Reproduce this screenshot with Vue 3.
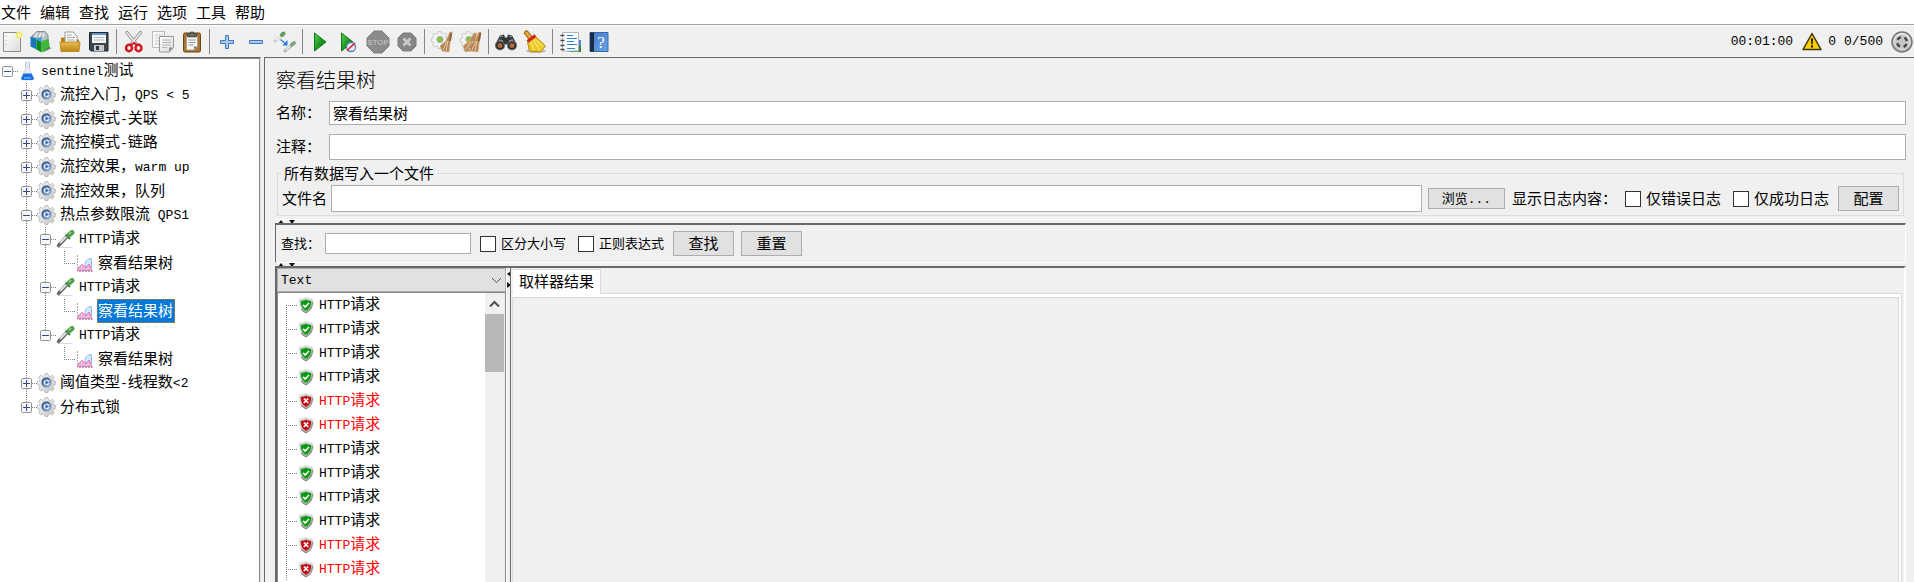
<script setup>
import { ref } from 'vue'

const menus = ['文件', '编辑', '查找', '运行', '选项', '工具', '帮助']

const toolGroups = [
  [['new', '新建'], ['templates', '模板'], ['open', '打开'], ['save', '保存']],
  [['cut', '剪切'], ['copy', '复制'], ['paste', '粘贴']],
  [['plus', '展开'], ['minus', '折叠'], ['toggle', '切换']],
  [['play', '启动'], ['playnow', '不停顿开始'], ['stop', '停止'], ['shutdown', '关闭']],
  [['clear', '清除'], ['clearall', '清除全部']],
  [['search', '搜索'], ['broom', '重置搜索']],
  [['list', '函数助手'], ['help', '帮助']],
]

// cells: one letter per indent column. "." blank, "v" line, "t" branch, "e" last branch
const tree = [
  { cells: 'r', box: '-', icon: 'flask', text: 'sentinel测试' },
  { cells: '.t', box: '+', icon: 'gear', text: '流控入门，QPS < 5' },
  { cells: '.t', box: '+', icon: 'gear', text: '流控模式-关联' },
  { cells: '.t', box: '+', icon: 'gear', text: '流控模式-链路' },
  { cells: '.t', box: '+', icon: 'gear', text: '流控效果，warm up' },
  { cells: '.t', box: '+', icon: 'gear', text: '流控效果，队列' },
  { cells: '.t', box: '-', icon: 'gear', text: '热点参数限流 QPS1' },
  { cells: '.vt', box: '-', icon: 'pipette', text: 'HTTP请求' },
  { cells: '.vve', icon: 'chart', text: '察看结果树' },
  { cells: '.vt', box: '-', icon: 'pipette', text: 'HTTP请求' },
  { cells: '.vve', icon: 'chart', text: '察看结果树', selected: true },
  { cells: '.ve', box: '-', icon: 'pipette', text: 'HTTP请求' },
  { cells: '.v.e', icon: 'chart', text: '察看结果树' },
  { cells: '.t', box: '+', icon: 'gear', text: '阈值类型-线程数<2' },
  { cells: '.e', box: '+', icon: 'gear', text: '分布式锁' },
]

const samples = [true, true, true, true, false, false, true, true, true, true, false, false]

const name = ref('察看结果树')
const comment = ref('')
const fileName = ref('')
const query = ref('')

// Splits a label into Latin and Chinese runs so each gets its own face and size
function runs(text) {
  return text.match(/[\x20-\x7e]+|[^\x20-\x7e]+/g).map((t) => ({ t, latin: t.charCodeAt(0) < 127 }))
}
</script>

<template>
  <div class="app">
    <svg class="defs" aria-hidden="true">
      <defs>
        <linearGradient id="gGreen" x1="0" y1="0" x2="1" y2="1">
          <stop offset="0" stop-color="#5fd05a" /><stop offset="0.5" stop-color="#1d9a22" /><stop offset="1" stop-color="#0a6b10" />
        </linearGradient>
        <linearGradient id="gGray" x1="0" y1="0" x2="0" y2="1">
          <stop offset="0" stop-color="#f2f2f2" /><stop offset="1" stop-color="#a8a8a8" />
        </linearGradient>
        <linearGradient id="gGear" x1="0" y1="0" x2="1" y2="1">
          <stop offset="0" stop-color="#fafafa" /><stop offset="1" stop-color="#c4c4c4" />
        </linearGradient>
        <linearGradient id="gRing" x1="0" y1="0" x2="1" y2="1">
          <stop offset="0" stop-color="#27477c" /><stop offset="1" stop-color="#8fb4e2" />
        </linearGradient>
        <linearGradient id="gGold" x1="0" y1="0" x2="0" y2="1">
          <stop offset="0" stop-color="#e8bd55" /><stop offset="1" stop-color="#bf8411" />
        </linearGradient>
        <linearGradient id="gPaper" x1="0" y1="0" x2="1" y2="1">
          <stop offset="0" stop-color="#ffffff" /><stop offset="1" stop-color="#dcdcdc" />
        </linearGradient>
        <linearGradient id="gBlue" x1="0" y1="0" x2="1" y2="1">
          <stop offset="0" stop-color="#3d78c6" /><stop offset="1" stop-color="#6fa6e6" />
        </linearGradient>
        <g id="gearShape">
          <path d="M8 0.6h3l.5 2.2 1.7.8 2-1.3 2.1 2.1-1.2 2 .7 1.700 2.200.5v3l-2.200.5-.7 1.700 1.200 2-2.100 2.100-2-1.200-1.700.7-.5 2.100H8l-.5-2.100-1.700-.7-2 1.200-2.100-2.100 1.200-2-.7-1.700-2-.5v-3l2-.5.7-1.700-1.200-2 2.100-2.100 2 1.300 1.700-.8z" />
        </g>
      </defs>
    </svg>

    <nav class="menubar">
      <button v-for="m in menus" :key="m" type="button" class="menu">{{ m }}</button>
    </nav>

    <header class="toolbar">
      <template v-for="(group, gi) in toolGroups" :key="gi">
        <span v-if="gi" class="sep"></span>
        <button v-for="[id, label] in group" :key="id" type="button" class="tool" :aria-label="label">
          <svg width="24" height="24" viewBox="0 0 24 24">
            <g v-if="id === 'new'">
              <path d="M3.500 2.500h17v19h-17z" fill="url(#gPaper)" stroke="#8c8c8c" />
              <path d="M6 6v12" stroke="#aaa" stroke-dasharray="1 3" />
              <circle cx="19" cy="5" r="3.500" fill="#f6e56a" /><circle cx="19" cy="5" r="1.500" fill="#fffde0" />
            </g>
            <g v-else-if="id === 'templates'">
              <path d="M3 6l5-4.500h8l3 3.500v6H4z" fill="#b9c0c4" stroke="#8a9296" />
              <path d="M6 7l2-4m2 4l2-4m2 4l1-4" stroke="#f5f5f5" stroke-width="1.300" />
              <path d="M1.500 6.500l6 2v11l-6-3z" fill="#1678b8" /><path d="M7.500 8.500l5-1.500v11l-5 1.500z" fill="#38a4dc" />
              <path d="M7.500 10l5 2v10.500l-5-3z" fill="#158a1c" /><path d="M12.500 12l7-3.500 1.500 10-8.500 4z" fill="#3db83a" />
              <path d="M19 17l4 1-9 4.500z" fill="#555" opacity=".5" />
            </g>
            <g v-else-if="id === 'open'">
              <path d="M3 21V7.500h5l1 2h12V21z" fill="#b67e14" />
              <path d="M7 13V2h8l4 4v7z" fill="#fafafa" stroke="#9a9a9a" />
              <path d="M9 5h5M9 7.500h8M9 10h8" stroke="#a6a6a6" />
              <path d="M2 12h20l-1 9.500H3z" fill="url(#gGold)" stroke="#b5800f" stroke-width=".8" />
            </g>
            <g v-else-if="id === 'save'">
              <path d="M2.500 2.500h18.500v18.500H4l-1.500-1.500z" fill="#3c4650" stroke="#20262c" />
              <path d="M5 3h14v10H5z" fill="#f3f5f7" /><path d="M5 3h14v2H5z" fill="#5b96cf" />
              <path d="M7 7.500h10M7 10h10" stroke="#bbb" />
              <path d="M7 15h10v6H7z" fill="#c5c9cc" /><path d="M9 16h3v4H9z" fill="#30363c" />
            </g>
            <g v-else-if="id === 'cut'">
              <path d="M5 2.500l10.500 13M18.500 2.500L8 15.500" stroke="#8f8f8f" stroke-width="3.200" stroke-linecap="round" />
              <path d="M5 2.500l10.500 13M18.500 2.500L8 15.500" stroke="#ededed" stroke-width="1.500" stroke-linecap="round" />
              <ellipse cx="7" cy="18" rx="3" ry="3.200" fill="#f0f0f0" stroke="#d3161d" stroke-width="2.500" />
              <ellipse cx="16.500" cy="18" rx="3" ry="3.200" fill="#f0f0f0" stroke="#d3161d" stroke-width="2.500" />
              <path d="M9 15l3-2 3 2" fill="none" stroke="#d3161d" stroke-width="2" />
            </g>
            <g v-else-if="id === 'copy'">
              <path d="M1.500 1.500h12v16h-12z" fill="#f7f7f7" stroke="#bdbdbd" />
              <path d="M4 5h8M4 8h4M4 11h4M4 14h4" stroke="#c8c8c8" />
              <path d="M8.500 6.500h14v11l-4 4.500h-10z" fill="url(#gPaper)" stroke="#979797" />
              <path d="M11 10h9M11 12.500h9M11 15h9M11 17.500h5" stroke="#b0b0b0" />
              <path d="M22 17.500h-4v4z" fill="#8b8b8b" />
            </g>
            <g v-else-if="id === 'paste'">
              <rect x="3.500" y="3" width="17" height="19" rx="1.500" fill="#a8742b" stroke="#6b4512" />
              <path d="M6.500 6h11v11l-3 3h-8z" fill="#f6f6f6" stroke="#999" stroke-width=".7" />
              <path d="M8.500 10h7M8.500 12.500h7M8.500 15h5" stroke="#999" />
              <path d="M7.500 7V4h3V2h3v2h3v3z" fill="#666c66" stroke="#333" stroke-width=".6" />
              <path d="M17.500 16.500h-3.500v3.500z" fill="#777" />
            </g>
            <path v-else-if="id === 'plus'" d="M10.500 5.500h3v5h5v3h-5v5h-3v-5h-5v-3h5z" fill="#a6c9ee" stroke="#3f79bd" />
            <path v-else-if="id === 'minus'" d="M5.500 10.500h13v3h-13z" fill="#a6c9ee" stroke="#3f79bd" />
            <g v-else-if="id === 'toggle'">
              <path d="M2 11l7-6" stroke="#cfcfcf" stroke-width="3" stroke-linecap="round" /><path d="M3 10l5-4.500" stroke="#fafafa" stroke-width="1.200" />
              <path d="M9 5l1.500-1.500" stroke="#5c9a5e" stroke-width="4" stroke-linecap="round" />
              <path d="M12 21l6-5" stroke="#b8b8b8" stroke-width="3" stroke-linecap="round" /><path d="M13 20l4-3.500" stroke="#f1f1f1" stroke-width="1.200" />
              <path d="M19 14.500l2-1.500" stroke="#7ca97c" stroke-width="4" stroke-linecap="round" />
              <path d="M7.500 9.500l5 4" stroke="#2b7be0" stroke-width="1.200" /><path d="M14.500 10v5.500h-5z" fill="#2b7be0" />
            </g>
            <path v-else-if="id === 'play'" d="M6.500 3l11.500 9-11.500 9z" fill="url(#gGreen)" stroke="#0d7a16" />
            <g v-else-if="id === 'playnow'">
              <path d="M4.500 3l11.500 9-11.500 9z" fill="url(#gGreen)" stroke="#0d7a16" />
              <circle cx="14" cy="17" r="4.500" fill="#e7e9f3" stroke="#5a7fc4" stroke-width="1.300" /><path d="M10 20.500l8-7.500" stroke="#e02020" stroke-width="1.500" />
            </g>
            <g v-else-if="id === 'stop'">
              <path d="M8 1h8l7 7v8l-7 7H8l-7-7V8z" fill="#8b8b8b" stroke="#7f7f7f" />
              <text x="12" y="15" text-anchor="middle" class="stop-text">STOP</text>
            </g>
            <g v-else-if="id === 'shutdown'">
              <path d="M8 3h8l5 5v8l-5 5H8l-5-5V8z" fill="#868686" stroke="#7a7a7a" />
              <path d="M8.500 8.500l7 7m0-7l-7 7" stroke="#c9c9c9" stroke-width="2.800" />
            </g>
            <g v-else-if="id === 'clear' || id === 'clearall'">
              <g transform="translate(1 1) scale(.9)" fill="#f4f4f4" stroke="#c4c4c4"><use href="#gearShape" /></g>
              <circle cx="10" cy="9.500" r="3.200" fill="#84c43c" stroke="#b5b5b5" />
              <path v-if="id === 'clearall'" d="M15 3l-5 8-6 5 2 6 7-1 3-9 2-9z" fill="#b98b5c" stroke="#d9bb96" stroke-width=".7" />
              <path v-if="id === 'clearall'" d="M7 19l5-8m-2 9l4-9" stroke="#e7cba8" />
              <path d="M20 2l-4 9-6 5 2 5 7 1 1-9 2-11z" fill="#b58352" stroke="#d2ab80" stroke-width=".7" />
              <path d="M13 20l4-9m-1 10l2-10" stroke="#e7cba8" />
              <path d="M20 11l1.500-8" stroke="#8a5c35" stroke-width="1.500" />
            </g>
            <g v-else-if="id === 'search'">
              <path d="M6 5.500l4-1 1 3h2l1-3 4 1 5 9-1 4h-8l-1-4h-2l-1 4H2l-1-4z" fill="#33373a" />
              <path d="M6 7l3-1M15 6l3 1M5 10l4 1M15 11l4-1" stroke="#8b9094" stroke-width="1.300" />
              <circle cx="6" cy="15.500" r="4.500" fill="#24282b" stroke="#7f858a" /><circle cx="18" cy="15.500" r="4.500" fill="#24282b" stroke="#7f858a" />
              <circle cx="6" cy="15.500" r="2.500" fill="#b3693a" /><circle cx="18" cy="15.500" r="2.500" fill="#b3693a" />
            </g>
            <g v-else-if="id === 'broom'">
              <ellipse cx="13" cy="21" rx="10" ry="2" fill="#bdbdbd" />
              <path d="M3.500 3l4 5" stroke="#9b6a12" stroke-width="5" stroke-linecap="round" /><path d="M3.500 3l4 5" stroke="#e0a63a" stroke-width="3" stroke-linecap="round" />
              <path d="M4.500 12l8-5.500 10 9.500-5 6-11-1z" fill="#edc928" stroke="#b48d0b" />
              <path d="M4.500 11.500l8-6" stroke="#d1261e" stroke-width="3" />
              <path d="M8 12l3 8M10.500 10.500l6 9M12 9.500l8 7" stroke="#fff08a" />
            </g>
            <g v-else-if="id === 'list'">
              <path d="M20 10h3v12H8l12-2z" fill="#2d8a3c" /><path d="M20 10h3v6h-3z" fill="#4b86cf" />
              <path d="M4.500 2.500h16v18.500h-16z" fill="#fff" stroke="#b2b2b2" />
              <path d="M2.500 5.500h4m-4 5h4m-4 5h4m-4 4h4" stroke="#444" stroke-width="1.500" />
              <path d="M9 5.500h6M9 8.500h10M9 11.500h7M9 14.500h10M9 18.500h8" stroke="#2d7fdd" />
            </g>
            <g v-else>
              <path d="M3 2.500h18v19H3z" fill="url(#gBlue)" stroke="#3a6aa6" /><path d="M3 2.500h4v19H3z" fill="#1b2c40" />
              <text x="14" y="18" text-anchor="middle" class="help-text">?</text>
            </g>
          </svg>
        </button>
      </template>
      <div class="status">
        <span class="latin clock">00:01:00</span>
        <button type="button" class="warn" aria-label="日志">
          <svg width="20" height="19" viewBox="0 0 20 19"><path d="M10 1.500L19 17.500H1z" fill="#fbce00" stroke="#3f3507" stroke-width="1.500" stroke-linejoin="round" /><path d="M9 6.500h2l-.4 6H9.400zM9 13.500h2v2H9z" fill="#111" /></svg>
        </button>
        <span class="latin errors">0</span>
        <span class="latin threads">0/500</span>
        <svg width="22" height="22" viewBox="0 0 22 22">
          <circle cx="11" cy="11" r="10" fill="url(#gGray)" stroke="#777" stroke-width="1.500" />
          <circle cx="11" cy="11" r="7.500" fill="#c6c6c6" stroke="#e2e2e2" />
          <circle cx="11" cy="11" r="5" fill="none" stroke="#444" stroke-width="2.500" stroke-dasharray="4 3.850" stroke-dashoffset="-2" />
        </svg>
      </div>
    </header>

    <main class="body">
      <aside class="plan">
        <ul class="tree">
          <li v-for="(node, i) in tree" :key="i" class="node">
            <span v-for="(c, ci) in node.cells" :key="ci" class="cell" :class="'c-' + (c === '.' ? 'n' : c)">
              <button v-if="node.box && ci === node.cells.length - 1" type="button" class="box" :aria-label="node.box === '+' ? '展开' : '折叠'">
                <svg width="11" height="11" viewBox="0 0 11 11">
                  <rect x=".5" y=".5" width="10" height="10" rx="1" fill="#f7f7f7" stroke="#919191" />
                  <path :d="node.box === '+' ? 'M2 5.500h7M5.500 2v7' : 'M2 5.500h7'" stroke="#2f4f9c" />
                </svg>
              </button>
            </span>
            <svg class="node-icon" width="19" height="20" viewBox="0 0 19 20">
              <g v-if="node.icon === 'flask'">
                <path d="M7.500 1h4v7l4.500 9.500q-.5 1.500-2 1.500H5q-1.500 0-2-1.500L7.500 8z" fill="#e6ecf4" stroke="#c9d0da" stroke-width=".8" />
                <path d="M5.500 12.500h8l2.300 5q-.3 1.500-1.800 1.500H5q-1.500 0-1.800-1.500z" fill="#1a6fe0" />
                <path d="M7.500 1.500v6M11.500 1.500v6" stroke="#b4bcc6" stroke-width=".8" /><path d="M6 17h7" stroke="#69aef8" stroke-width="1.500" />
              </g>
              <g v-else-if="node.icon === 'gear'">
                <g fill="url(#gGear)" stroke="#b4b4b4" stroke-width=".8"><use href="#gearShape" /></g>
                <circle cx="9.500" cy="9.500" r="5.500" fill="#b9bfc8" /><circle cx="9.500" cy="9.500" r="3.900" fill="#eaf1fb" stroke="url(#gRing)" stroke-width="2" />
                <path d="M8.300 7l4 2.500-4 2.500z" fill="#4d74ae" />
              </g>
              <g v-else-if="node.icon === 'pipette'">
                <path d="M1.500 18.500h15" stroke="#d9d9d9" />
                <path d="M2.500 16.500l8.500-9" stroke="#6b6b6b" stroke-width="3.500" stroke-linecap="round" /><path d="M4 14l7-7" stroke="#f2f2f2" stroke-width="1.700" />
                <path d="M9.500 5.500l4.500 4.500" stroke="#3d7c40" stroke-width="2" />
                <path d="M13 6l3-2.500" stroke="#55a04e" stroke-width="5" stroke-linecap="round" /><path d="M13 5l2-2" stroke="#9ad08e" stroke-width="1.500" />
              </g>
              <g v-else>
                <path d="M10 13c0-5 2.500-7.500 6.500-7.500v9l-3 1z" fill="#d6e9fb" stroke="#8db8e4" />
                <path d="M3 17.500v-2.500l4-3.500 4 3.500 3-4 3 6.500z" fill="#f7b3df" stroke="#d67ab8" />
                <path d="M2.500 2v16.500H19" fill="none" stroke="#a9a9a9" stroke-dasharray="2 1" />
              </g>
            </svg>
            <span class="label" :class="{ selected: node.selected }"><span v-for="(r, ri) in runs(node.text)" :key="ri" :class="{ latin: r.latin }">{{ r.t }}</span></span>
          </li>
        </ul>
      </aside>

      <section class="detail">
        <div class="upper">
          <h1 class="title">察看结果树</h1>
          <div class="field">
            <label for="name">名称：</label><input id="name" v-model="name" type="text" />
          </div>
          <div class="field comment">
            <label for="comment">注释：</label><input id="comment" v-model="comment" type="text" />
          </div>
          <fieldset class="file">
            <legend>所有数据写入一个文件</legend>
            <div class="file-row">
              <label for="file">文件名</label><input id="file" v-model="fileName" type="text" />
              <button type="button" class="btn browse">浏览<span class="latin">...</span></button>
              <span class="log-label">显示日志内容：</span>
              <label class="check"><input type="checkbox" /><span>仅错误日志</span></label>
              <label class="check"><input type="checkbox" /><span>仅成功日志</span></label>
              <button type="button" class="btn config">配置</button>
            </div>
          </fieldset>
        </div>

        <div class="splitter"><svg width="18" height="4" viewBox="0 0 18 4"><path d="M3 0l3 4H0zM11 0h6l-3 4z" fill="#111" /></svg></div>

        <div class="search">
          <label for="query">查找：</label><input id="query" v-model="query" type="text" />
          <label class="check"><input type="checkbox" /><span>区分大小写</span></label>
          <label class="check"><input type="checkbox" /><span>正则表达式</span></label>
          <button type="button" class="btn">查找</button>
          <button type="button" class="btn second">重置</button>
        </div>

        <div class="splitter"><svg width="18" height="4" viewBox="0 0 18 4"><path d="M3 0l3 4H0zM11 0h6l-3 4z" fill="#111" /></svg></div>

        <div class="lower">
          <div class="results">
            <div class="combo">
              <select class="latin" aria-label="渲染器"><option>Text</option></select>
              <svg width="11" height="7" viewBox="0 0 11 7"><path d="M1 1l4.500 4.500L10 1" fill="none" stroke="#555" /></svg>
            </div>
            <div class="list">
              <ul class="samples">
                <li v-for="(ok, i) in samples" :key="i" class="sample" :class="{ failed: !ok, first: i === 0 }">
                  <span class="branch"></span>
                  <svg width="16" height="18" viewBox="0 0 16 18">
                    <path d="M8 1c2 1.500 4.200 2 7 2 .3 7-1.300 11-7 14-5.700-3-7.300-7-7-14 2.800 0 5-.5 7-2z" fill="#d2d2d2" stroke="#e6e6e6" />
                    <path d="M14.500 6c-.2 5-2 8.500-6.500 10.700-2-1-3.500-2.200-4.700-3.700" fill="none" stroke="#909090" stroke-width="1.500" />
                    <path d="M8 3.500c1.500 1 3.200 1.400 5.200 1.500 0 4.700-1.300 7.700-5.200 10-3.900-2.300-5.200-5.300-5.200-10 2-.1 3.700-.5 5.200-1.500z" :fill="ok ? '#079a0c' : '#c00d12'" />
                    <path v-if="ok" d="M5 9l2.200 2L11 7" fill="none" stroke="#fff" stroke-width="1.700" />
                    <path v-else d="M5.800 6.500l4.400 4.500m0-4.500l-4.400 4.500" stroke="#fff" stroke-width="1.700" />
                  </svg>
                  <span class="sample-label"><span class="latin">HTTP</span>请求</span>
                </li>
              </ul>
              <div class="scroll">
                <button type="button" class="scroll-up" aria-label="向上"><svg width="11" height="8" viewBox="0 0 11 8"><path d="M1 6.500l4.500-4.500L10 6.500" fill="none" stroke="#505050" stroke-width="2" /></svg></button>
                <div class="thumb"></div>
              </div>
            </div>
          </div>
          <div class="divider"><svg width="4" height="18" viewBox="0 0 4 18"><path d="M4 0v6L0 3zM0 11l4 3-4 3z" fill="#111" /></svg></div>
          <div class="output">
            <div class="tabs" role="tablist"><button type="button" class="tab" role="tab" aria-selected="true">取样器结果</button></div>
            <div class="panel" role="tabpanel"><div class="panel-inner"></div></div>
          </div>
        </div>
      </section>
    </main>
  </div>
</template>

<style>
body {
  margin: 0;
}
</style>

<style scoped>
.app {
  display: flex;
  flex-direction: column;
  height: 100vh;
  overflow: hidden;
  background: #f0f0f0;
  color: #000;
  font: 15px/20px "Noto Sans CJK SC", sans-serif;
}
.app * {
  box-sizing: border-box;
}
.defs {
  position: absolute;
  width: 0;
  height: 0;
}
button,
input,
select {
  font: inherit;
  color: inherit;
  margin: 0;
  padding: 0;
  border: 0;
  border-radius: 0;
  background: none;
}
ul {
  list-style: none;
  margin: 0;
  padding: 0;
}
svg {
  display: block;
  flex: none;
}
.latin {
  font-family: "Liberation Mono", monospace;
  font-size: 13px;
  white-space: pre;
}
.menubar {
  display: flex;
  gap: 9px;
  height: 25px;
  padding: 0 1px;
  background: #fff;
  border-bottom: 1px solid #a0a0a0;
  flex: none;
}
.menu {
  line-height: 24px;
}
.toolbar {
  display: flex;
  align-items: center;
  gap: 5px;
  height: 32px;
  border-top: 1px solid #fff;
  flex: none;
}
.tool {
  width: 24px;
  height: 24px;
  flex: none;
}
.sep {
  width: 1px;
  height: 25px;
  background: #858585;
}
.stop-text {
  font: bold 8px "Liberation Sans", sans-serif;
  fill: #b8b8b8;
}
.help-text {
  font: 17px "Liberation Serif", serif;
  fill: #fff;
}
.status {
  display: flex;
  align-items: center;
  margin-left: auto;
  padding-right: 1px;
}
.clock {
  margin-right: 9px;
}
.warn {
  margin-right: 6px;
}
.errors,
.threads {
  margin-right: 8px;
}
.body {
  display: flex;
  flex: 1;
  min-height: 0;
}
.plan {
  width: 261px;
  flex: none;
  border-top: 1px solid #696969;
  border-right: 1px solid #e3e3e3;
}
.tree {
  height: 100%;
  background: #fff;
  border-top: 1px solid #828790;
  border-right: 1px solid #828790;
}
.node {
  display: flex;
  align-items: center;
  height: 24px;
}
.cell {
  display: flex;
  align-items: center;
  width: 19px;
  height: 24px;
  padding-left: 2px;
  background-repeat: no-repeat;
  --v: repeating-linear-gradient(to bottom, #808080 0 1px, #fff 1px 2px);
  --h: repeating-linear-gradient(to right, #808080 0 1px, #fff 1px 2px);
}
.c-r {
  background-image: var(--h);
  background-size: 11px 1px;
  background-position: 7px 12px;
}
.c-v {
  background-image: var(--v);
  background-size: 1px 24px;
  background-position: 7px 0;
}
.c-t {
  background-image: var(--v), var(--h);
  background-size: 1px 24px, 11px 1px;
  background-position: 7px 0, 7px 12px;
}
.c-e {
  background-image: var(--v), var(--h);
  background-size: 1px 12px, 11px 1px;
  background-position: 7px 0, 7px 12px;
}
.node-icon {
  margin: 0 2px 0 -1px;
}
.label {
  margin-left: 1px;
  padding: 0 1px 2px;
  border: 1px solid transparent;
  border-width: 1px 0;
  white-space: nowrap;
}
.selected {
  background: #0078d7;
  color: #fff;
  border: 1px dotted #c87a30;
  padding: 0 1px 2px 0;
}
.detail {
  display: flex;
  flex-direction: column;
  flex: 1;
  min-width: 0;
  margin-left: 3px;
  padding: 0 8px 0 10px;
  border-top: 1px solid #696969;
  border-left: 1px solid #696969;
}
.upper {
  padding-bottom: 3px;
  border-bottom: 1px solid #fff;
}
.title {
  margin: 0;
  padding-left: 1px;
  font-size: 20px;
  font-weight: 300;
  line-height: 43px;
}
.field {
  display: flex;
  align-items: center;
  height: 24px;
}
.field label {
  width: 54px;
  padding: 0 0 2px 1px;
  flex: none;
}
input[type="text"] {
  min-width: 0;
  height: 100%;
  padding: 0 3px 2px;
  background: #fff;
  border: 1px solid #abadb3;
}
.field input {
  flex: 1;
}
.comment {
  height: 26px;
  margin-top: 9px;
}
.file {
  margin: 3px 2px 0;
  padding: 2px 4px 3px 3px;
  border: 1px solid #dcdcdc;
  min-width: 0;
}
.file legend {
  padding: 0 3px;
}
.file-row {
  display: flex;
  align-items: center;
  height: 27px;
}
.file-row > label:first-child {
  width: 50px;
  padding: 0 0 2px 1px;
  flex: none;
}
.file-row input[type="text"] {
  flex: 1;
}
.btn {
  width: 61px;
  height: 25px;
  padding-bottom: 2px;
  line-height: 21px;
  background: #e1e1e1;
  border: 1px solid #adadad;
  flex: none;
}
.browse {
  width: 77px;
  height: 21px;
  margin: 0 7px 0 6px;
  font-size: 13px;
  line-height: 17px;
}
.log-label {
  width: 113px;
  padding-bottom: 2px;
  flex: none;
}
.check {
  display: flex;
  align-items: center;
  gap: 5px;
  margin-right: 12px;
  white-space: nowrap;
}
.check span {
  padding-bottom: 2px;
}
.check input {
  appearance: none;
  width: 16px;
  height: 16px;
  background: #fff;
  border: 1px solid #333;
}
.config {
  margin-left: -3px;
}
.splitter {
  height: 3px;
  padding-left: 3px;
  flex: none;
}
.search {
  display: flex;
  align-items: center;
  height: 40px;
  padding-left: 5px;
  border: 1px solid #fff;
  border-top: 2px solid #696969;
  border-left-color: #696969;
  flex: none;
}
.search label {
  font-size: 13px;
}
.search > label:first-child {
  width: 44px;
  padding-bottom: 2px;
}
.search input[type="text"] {
  width: 146px;
  height: 21px;
  margin-right: 9px;
}
.search .btn {
  margin-left: -3px;
}
.search .second {
  margin-left: 7px;
}
.lower {
  display: flex;
  flex: 1;
  min-height: 0;
  border-top: 2px solid #696969;
  border-left: 2px solid #696969;
  border-right: 2px solid #fff;
}
.results {
  display: flex;
  flex-direction: column;
  width: 229px;
  flex: none;
}
.combo {
  display: grid;
  align-items: center;
  height: 24px;
  flex: none;
}
.combo select {
  grid-area: 1 / 1;
  height: 24px;
  padding: 1px 3px 0;
  appearance: none;
  background: #e1e1e1;
  border: 1px solid #adadad;
}
.combo svg {
  grid-area: 1 / 1;
  justify-self: end;
  margin-right: 4px;
  pointer-events: none;
}
.list {
  display: flex;
  flex: 1;
  min-height: 0;
  overflow: hidden;
  background: #fff;
  border: 1px solid #828790;
  border-bottom: 0;
}
.samples {
  flex: 1;
  padding-left: 8px;
}
.sample {
  display: flex;
  align-items: center;
  height: 24px;
}
.branch {
  width: 12px;
  height: 24px;
  background-repeat: no-repeat;
  background-image: repeating-linear-gradient(to bottom, #808080 0 1px, #fff 1px 2px), repeating-linear-gradient(to right, #808080 0 1px, #fff 1px 2px);
  background-size: 1px 24px, 11px 1px;
  background-position: 0 0, 0 12px;
}
.first .branch {
  background-position: 0 12px, 0 12px;
}
.sample-label {
  margin-left: 5px;
  padding-bottom: 1px;
}
.failed {
  color: #f00;
}
.scroll {
  width: 20px;
  background: #f0f0f0;
}
.scroll-up {
  display: grid;
  place-items: center;
  width: 19px;
  height: 21px;
}
.thumb {
  width: 19px;
  height: 58px;
  background: #b8b8b8;
}
.divider {
  width: 4px;
  padding-top: 3px;
  border-left: 1px solid #fff;
  flex: none;
}
.output {
  display: flex;
  flex-direction: column;
  flex: 1;
  min-width: 0;
  padding: 1px 2px 0 1px;
  border-left: 1px solid #696969;
}
.tabs {
  display: flex;
  height: 25px;
  padding-left: 1px;
  box-shadow: inset 0 -1px #d9d9d9;
  flex: none;
}
.tab {
  padding: 0 6px 3px;
  line-height: 20px;
  background: #fff;
  border: 1px solid #d9d9d9;
  border-width: 1px 1px 0 0;
}
.panel {
  display: flex;
  flex: 1;
  padding: 3px 2px 0 0;
  background: #fff;
  border-right: 1px solid #d9d9d9;
}
.panel-inner {
  flex: 1;
  background: #f0f0f0;
  border: 1px solid #d9d9d9;
  border-bottom: 0;
}
</style>
